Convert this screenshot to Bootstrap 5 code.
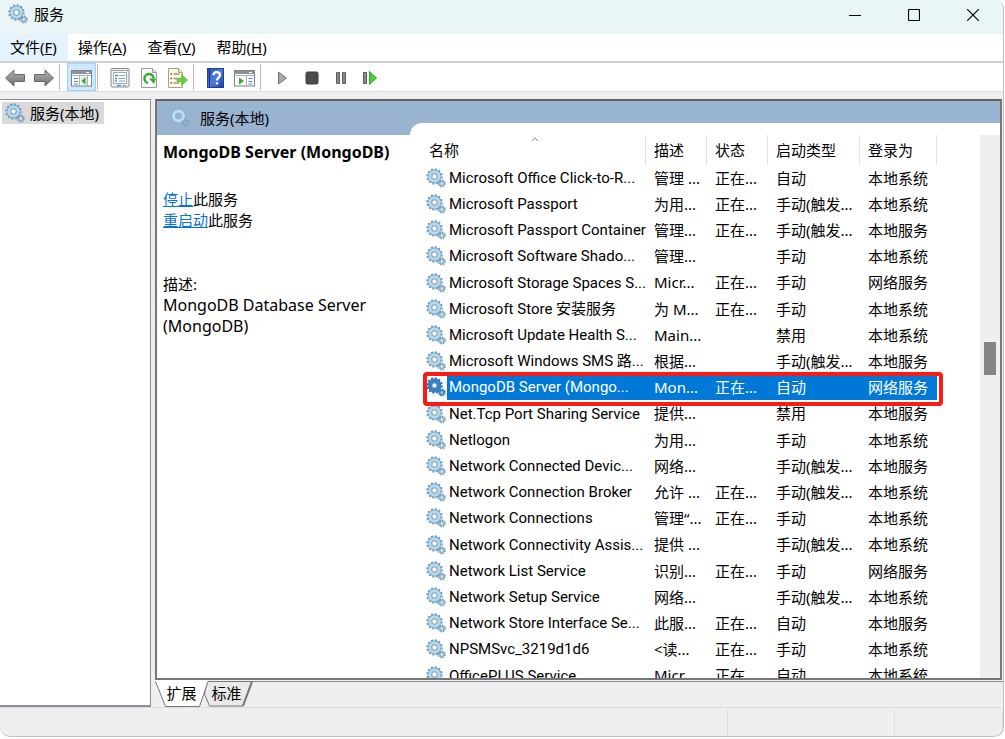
<!DOCTYPE html>
<html lang="zh-CN">
<head>
<meta charset="utf-8">
<meta name="viewport" content="width=device-width, initial-scale=1">
<title>服务</title>
<link href="https://cdn.jsdelivr.net/npm/bootstrap@5.3.0/dist/css/bootstrap.min.css" rel="stylesheet">
<style>
  body { font-family: "Noto Sans", "Noto Sans CJK SC", sans-serif; font-size: 15px; line-height: 21px; color: #000; background: #fff; }
  .app-window { height: calc(100vh - 2px); margin-right: 1px; border: solid #bfc1c3; border-width: 0 1px 1px 0; border-radius: 0 8px 10px 10px; background: #efefef; }
  .title-bar { height: 34px; background: #eaf5f8; padding: 0 1px 6px 8px; }
  .title-bar button { width: 59px; height: 28px; border: 0; background: none; padding: 0; }
  .title-bar span { padding-left: 6px; }
  .menu-bar { height: 29px; background: #fff; border-bottom: 2px solid #cdd0d4; }
  .menu-bar a { color: #000; padding: 0 11px 0 10px; line-height: 27px; text-decoration: none; }
  .menu-bar a.current { background: #e5f3ff; }
  .tool-bar { height: 29px; background: #fff; border-bottom: 1px solid #dcdcdc; }
  .tool-bar button { width: 29px; height: 28px; border: 0; background: none; padding: 0; }
  .tool-bar button.pressed { background: #cce8ff; border: 1px solid #99d1ff; }
  .divider { width: 1px; height: 26px; background: #b9bbbd; margin: 0 7px 0 1px; }
  .lower { margin-top: 7px; }
  .tree-pane { width: 151px; background: #fff; border: solid #8b9096; border-width: 1px 1px 2px 0; }
  .tree-pane a { background: #d9d9d9; color: #000; text-decoration: none; margin: 2px 0 0 2px; padding: 0 5px 0 3px; gap: 5px; height: 22px; }
  .result-pane { border: 2px solid #777; border-top-color: #65645f; margin-right: 1px; background: #9ab3d1; }
  .detail-head { height: 34px; padding: 0 0 0 13px; gap: 10px; }
  .detail-col { width: 253px; }
  .detail-body { padding: 7px 6px; background: #fff; }
  .detail-body a { color: #0a70d8; }
  .detail-body .wide { font-size: 16px; }
  .detail-body .actions { margin: 26px 0; }
  .detail-body .about { margin: 0; padding-top: 17px; }
  .list-col { margin-top: 22px; padding: 12px 0 0 15px; border-radius: 12px 0 0 0; background: #fff; }
  .svc { table-layout: fixed; width: 512px; border-collapse: separate; border-spacing: 0; white-space: nowrap; }
  .svc th { height: 30px; font-weight: 400; padding: 0 0 0 8px; border-right: 1px solid #e2e2e2; }
  .svc th:first-child { padding-left: 4px; }
  .svc td { height: 26px; padding: 0 0 0 8px; }
  .svc td:first-child { padding: 0 0 0 1px; }
  .svc tr:nth-child(5n) td { height: 27px; }
  .svc td svg { margin-top: 3px; vertical-align: top; }
  .svc td span { display: inline-block; height: 26px; line-height: 27px; padding-left: 3px; vertical-align: top; }
  .svc .latin { font-family: Roboto, "Noto Sans CJK SC", sans-serif; }
  .svc .picked td { color: #fff; background: #0078d7; }
  .svc .picked td:first-child { background: linear-gradient(90deg, #fff 22px, #0078d7 22px); }
  .svc .picked::after { content: ""; position: absolute; inset: -2px -6px -6px -2px; border: 4px solid #fb1b12; border-radius: 4px; }
  .c-name { width: 221px; } .c-sm { width: 61px; } .c-type { width: 92px; } .c-user { width: 77px; }
  .sort-mark { position: absolute; left: 106px; top: 2px; }
  .scroll-track { width: 20px; background: #efefef; }
  .scroll-thumb { width: 12px; height: 33px; background: #858585; }
  .before { flex: 207; } .after { flex: 303; }
  .tab-strip { position: relative; z-index: 0; height: 27px; }
  .tab-strip button { border: 0; background: none; padding: 0; color: #000; height: 27px; }
  .tab-strip svg { position: absolute; left: 0; top: 0; z-index: -1; }
  .tab-one { width: 53px; } .tab-two { width: 37px; }
  .status-bar { height: 29px; border-top: 1px solid #dcdcdc; }
  .status-bar div { border-right: 1px solid #dcdcdc; margin-top: 2px; }
  .s-mid { width: 167px; } .s-end { width: 108px; }
</style>
</head>
<body>
<svg class="position-absolute" width="0" height="0" aria-hidden="true">
  <defs>
    <linearGradient id="gray" x1="0" y1="0" x2="0" y2="1"><stop offset="0" stop-color="#b5b5b5"/><stop offset="1" stop-color="#6c6c6c"/></linearGradient>
    <linearGradient id="navy" x1="0" y1="0" x2="1" y2="1"><stop offset="0" stop-color="#2450b8"/><stop offset=".5" stop-color="#4c7be0"/><stop offset="1" stop-color="#1c3d9c"/></linearGradient>
  </defs>
  <symbol id="gear" viewBox="0 0 20 20">
    <circle cx="8.5" cy="8.5" r="7" fill="none" stroke="#7396b0" stroke-width="2.4" stroke-dasharray="2 1.67"/>
    <circle cx="8.5" cy="8.5" r="4.9" fill="none" stroke="#7faccb" stroke-width="4"/>
    <circle cx="8.5" cy="8.5" r="4.7" fill="none" stroke="#b5daf0" stroke-width="2.8"/>
    <circle cx="8.5" cy="8.5" r="2.7" fill="#fff" stroke="#6b8da8" stroke-width=".9"/>
    <circle cx="15.8" cy="15.5" r="3.2" fill="none" stroke="#6f91ab" stroke-width="1.6" stroke-dasharray="1.4 1.1"/>
    <circle cx="15.8" cy="15.5" r="2" fill="#e6f2f9" stroke="#8ab1cc" stroke-width="1.6"/>
  </symbol>
  <symbol id="gear-hot" viewBox="0 0 20 20">
    <circle cx="8.5" cy="8.5" r="7" fill="none" stroke="#2a6ca8" stroke-width="2.4" stroke-dasharray="2 1.67"/>
    <circle cx="8.5" cy="8.5" r="4.8" fill="none" stroke="#3483c4" stroke-width="4.2"/>
    <circle cx="8.5" cy="8.5" r="2.6" fill="#fff" stroke="#2368a6" stroke-width=".8"/>
    <circle cx="15.8" cy="15.5" r="3.2" fill="none" stroke="#2e6da2" stroke-width="1.6" stroke-dasharray="1.4 1.1"/>
    <circle cx="15.8" cy="15.5" r="2" fill="#bcdcf2" stroke="#3c84bd" stroke-width="1.6"/>
  </symbol>
  <symbol id="ring" viewBox="0 0 20 20">
    <circle cx="8.5" cy="8" r="6.6" fill="none" stroke="#7fa3c1" stroke-width="1.2" stroke-dasharray="1.6 1.2"/>
    <circle cx="8.5" cy="8" r="5" fill="none" stroke="#b9e0f2" stroke-width="3"/>
    <circle cx="15.5" cy="15" r="2.6" fill="none" stroke="#7a9dbc" stroke-width="2.4" stroke-dasharray="1.2 1"/>
  </symbol>
</svg>

<div class="app-window d-flex flex-column overflow-hidden">
  <header class="title-bar d-flex align-items-center">
    <svg width="20" height="20"><use href="#gear"/></svg>
    <span class="me-auto">服务</span>
    <button aria-label="最小化"><svg width="12" height="12"><path d="M0 6.5h12" stroke="#000"/></svg></button>
    <button aria-label="最大化"><svg width="12" height="12"><rect x=".5" y=".5" width="11" height="11" rx="1" fill="none" stroke="#000" stroke-width="1.2"/></svg></button>
    <button aria-label="关闭"><svg width="12" height="12"><path d="M0 0L12 12M12 0L0 12" stroke="#000" stroke-width="1.2"/></svg></button>
  </header>

  <nav class="menu-bar d-flex">
    <a href="#" class="current">文件(<u>F</u>)</a>
    <a href="#">操作(<u>A</u>)</a>
    <a href="#">查看(<u>V</u>)</a>
    <a href="#">帮助(<u>H</u>)</a>
  </nav>

  <div class="tool-bar d-flex align-items-center" role="toolbar">
    <button aria-label="后退"><svg width="22" height="20"><path d="M1.500 10L10 2v4.500h10.500v7H10V18z" fill="url(#gray)" stroke="#6a6a6a"/></svg></button>
    <button aria-label="前进"><svg width="22" height="20"><path d="M20.500 10L12 2v4.500H1.500v7H12V18z" fill="url(#gray)" stroke="#6a6a6a"/></svg></button>
    <span class="divider"></span>
    <button aria-label="显示控制台树" class="pressed"><svg width="21" height="18"><rect x=".5" y="1.500" width="20" height="15.500" fill="#fff" stroke="#7d838a"/><path d="M1 2h19v3H1z" fill="#8b929a"/><path d="M1 6.500h19" stroke="#a9afb5"/><path d="M3 9.500h4M3 12.500h4M3 15h4" stroke="#4a87c4"/><path d="M8.500 7v10M16.500 7v10" stroke="#a9afb5"/><path d="M10 8h6v8h-6z" fill="#dff0da"/><path d="M14.500 8.500v7L10.500 12z" fill="#3aa52c"/><path d="M15 3.500h3" stroke="#fff"/></svg></button>
    <span class="divider"></span>
    <button aria-label="属性"><svg width="20" height="20"><rect x="1" y=".5" width="18" height="18.500" rx="1" fill="#f1f2f3" stroke="#858a90"/><path d="M2 2.500h13" stroke="#9da3a8"/><path d="M16 2.500h2" stroke="#4a87c4"/><rect x="3.500" y="4.500" width="13" height="11" fill="#fff" stroke="#a8adb2"/><path d="M5 7.500h3M5 10.500h2M5 13h2" stroke="#3e8bc8" stroke-width="1.500"/><path d="M9 7.500h6M8.500 10.500H15M8.500 13H15" stroke="#78a8cd"/><path d="M7 17.500h4" stroke="#37a5de" stroke-width="1.500"/><path d="M13 17.500h3" stroke="#999"/></svg></button>
    <button aria-label="刷新"><svg width="18" height="20"><path d="M1.500.5h11l4 4v15h-15z" fill="#fafafa" stroke="#9a9da0"/><path d="M12.500.5v4h4" fill="#ddd" stroke="#9a9da0"/><path d="M8 15a4.500 4.500 0 1 1 5.500-4.500" fill="none" stroke="#36a936" stroke-width="2.500"/><path d="M9 10.500h7l-2 5.500z" fill="#36a936"/></svg></button>
    <button aria-label="导出列表"><svg width="21" height="20"><path d="M1.500.5h10l4 4v15h-14z" fill="#fff8df" stroke="#a5a08f"/><path d="M11.500.5v4h4" fill="#eee0b0" stroke="#a5a08f"/><path d="M3.500 6h1.500M3.500 10.500h1.500M3.500 15h1.500" stroke="#555" stroke-width="1.500"/><path d="M6.500 6h6M6.500 10.500h4M6.500 15h6" stroke="#9d9475" stroke-width="1.500"/><path d="M10 10.500h4.500v-4l6 5.500-6 5.500v-4H10z" fill="#5fd03a" stroke="#55b535" stroke-width=".6"/></svg></button>
    <span class="divider"></span>
    <button aria-label="帮助"><svg width="18" height="20"><rect x=".5" y=".5" width="16" height="19" fill="url(#navy)" stroke="#233f8e"/><path d="M2.500 1v18" stroke="#15317e"/><path d="M6.500 7.200C6.500 3 13 3.200 13 7c0 2.500-3 2.700-3 5.500" fill="none" stroke="#fff" stroke-width="2.200"/><path d="M8.800 14.200h2.400v2.300H8.800z" fill="#fff"/></svg></button>
    <button aria-label="操作窗格"><svg width="21" height="18"><rect x=".5" y="1.500" width="20" height="15.500" fill="#fff" stroke="#7d838a"/><path d="M1 2h19v3H1z" fill="#8b929a"/><path d="M1 6.500h19M12.500 7v10" stroke="#a9afb5"/><path d="M5 8.500v7l5-3.500z" fill="#3aa52c"/><path d="M14.500 9.500h4M14.500 12.500h4M14.500 15h4" stroke="#4a87c4"/><path d="M15 3.500h3" stroke="#fff"/></svg></button>
    <span class="divider"></span>
    <button aria-label="启动"><svg width="12" height="16"><path d="M1.500 2v12L9.500 8z" fill="#a8a8a8" stroke="#747474"/></svg></button>
    <button aria-label="停止"><svg width="14" height="14"><rect x="1" y="1" width="12" height="12" rx="1.500" fill="#4c4c4c" stroke="#3b3b3b"/></svg></button>
    <button aria-label="暂停"><svg width="12" height="14"><path d="M1.500 1.500h3v11h-3zM7.500 1.500h3v11h-3z" fill="#8b8b8b" stroke="#5c5c5c"/></svg></button>
    <button aria-label="重新启动"><svg width="16" height="16"><path d="M1.500 2.500h3v11h-3z" fill="#8b8b8b" stroke="#555"/><path d="M7.500 1.500v13L14.500 8z" fill="#45cf32" stroke="#2fa824"/></svg></button>
  </div>

  <main class="lower d-flex flex-grow-1" style="min-height:0">
    <aside class="tree-pane d-flex align-items-start flex-shrink-0">
      <a href="#" class="d-flex align-items-center"><svg width="20" height="20"><use href="#gear"/></svg>服务(本地)</a>
    </aside>
    <div class="d-flex flex-column flex-grow-1 ms-1" style="min-width:0">
      <section class="result-pane d-flex flex-grow-1 overflow-hidden" style="min-height:0">
        <div class="detail-col d-flex flex-column flex-shrink-0">
          <div class="detail-head d-flex align-items-center"><svg width="20" height="20"><use href="#ring"/></svg><span>服务(本地)</span></div>
          <div class="detail-body flex-grow-1">
            <strong class="d-block wide">MongoDB Server (MongoDB)</strong>
            <p class="actions"><a href="#">停止</a>此服务<br><a href="#">重启动</a>此服务</p>
            <p class="about">描述:<br><span class="wide">MongoDB Database Server (MongoDB)</span></p>
          </div>
        </div>
        <div class="list-col d-flex flex-grow-1 justify-content-between overflow-hidden">
          <div>
            <table class="svc">
              <colgroup><col class="c-name"><col class="c-sm"><col class="c-sm"><col class="c-type"><col class="c-user"></colgroup>
              <thead><tr>
                <th class="position-relative">名称<svg class="sort-mark" width="8" height="5"><path d="M1 4l3-3 3 3" fill="none" stroke="#888"/></svg></th>
                <th>描述</th><th>状态</th><th>启动类型</th><th>登录为</th>
              </tr></thead>
              <tbody id="services"></tbody>
            </table>
          </div>
          <div class="scroll-track d-flex flex-column align-items-center">
            <div class="before"></div><div class="scroll-thumb"></div><div class="after"></div>
          </div>
        </div>
      </section>
      <div class="tab-strip d-flex flex-shrink-0">
        <svg width="100%" height="27">
          <rect y="1" width="100%" height="1" fill="#8a8a8a"/>
          <path d="M49.500 14l5 12h33l9-24.500H52z" fill="#e9e9e9" stroke="#777"/>
          <path d="M88 26l9-24" stroke="#777" stroke-width="2"/>
          <path d="M0 0l10.500 26.500h34L53 1.500V0z" fill="#fff"/><path d="M.5 1.500l10 25h34L53 1.500" fill="none" stroke="#777"/>
        </svg>
        <button class="tab-one">扩展</button>
        <button class="tab-two">标准</button>
      </div>
    </div>
  </main>

  <footer class="status-bar d-flex flex-shrink-0">
    <div class="flex-grow-1"></div><div class="s-mid"></div><div class="s-end"></div>
  </footer>
</div>

<script>
  const SYS = '本地系统', LOCAL = '本地服务', NET = '网络服务';
  const services = [
    ['Microsoft Office Click-to-R...', '管理 ...', '正在...', '自动', SYS],
    ['Microsoft Passport', '为用...', '正在...', '手动(触发...', SYS],
    ['Microsoft Passport Container', '管理...', '正在...', '手动(触发...', LOCAL],
    ['Microsoft Software Shado...', '管理...', '', '手动', SYS],
    ['Microsoft Storage Spaces S...', 'Micr...', '正在...', '手动', NET],
    ['Microsoft Store 安装服务', '为 M...', '正在...', '手动', SYS],
    ['Microsoft Update Health S...', 'Main...', '', '禁用', SYS],
    ['Microsoft Windows SMS 路...', '根据...', '', '手动(触发...', LOCAL],
    ['MongoDB Server (Mongo...', 'Mon...', '正在...', '自动', NET],
    ['Net.Tcp Port Sharing Service', '提供...', '', '禁用', LOCAL],
    ['Netlogon', '为用...', '', '手动', SYS],
    ['Network Connected Devic...', '网络...', '', '手动(触发...', LOCAL],
    ['Network Connection Broker', '允许 ...', '正在...', '手动(触发...', SYS],
    ['Network Connections', '管理“...', '正在...', '手动', SYS],
    ['Network Connectivity Assis...', '提供 ...', '', '手动(触发...', SYS],
    ['Network List Service', '识别...', '正在...', '手动', NET],
    ['Network Setup Service', '网络...', '', '手动(触发...', SYS],
    ['Network Store Interface Se...', '此服...', '正在...', '自动', LOCAL],
    ['NPSMSvc_3219d1d6', '<读...', '正在...', '手动', SYS],
    ['OfficePLUS Service', 'Micr...', '正在...', '自动', SYS]
  ];
  const body = document.getElementById('services');
  services.forEach((row, i) => {
    const tr = body.insertRow();
    const picked = i === 8;
    if (picked) tr.className = 'picked position-relative';
    row.forEach((text, c) => {
      const td = tr.insertCell();
      if (c === 0) {
        td.className = 'latin';
        td.innerHTML = `<svg width="20" height="20"><use href="#${picked ? 'gear-hot' : 'gear'}"/></svg><span></span>`;
        td.lastChild.textContent = text;
      } else {
        td.textContent = text;
      }
    });
  });
</script>
<script src="https://cdn.jsdelivr.net/npm/bootstrap@5.3.0/dist/js/bootstrap.bundle.min.js"></script>
</body>
</html>
